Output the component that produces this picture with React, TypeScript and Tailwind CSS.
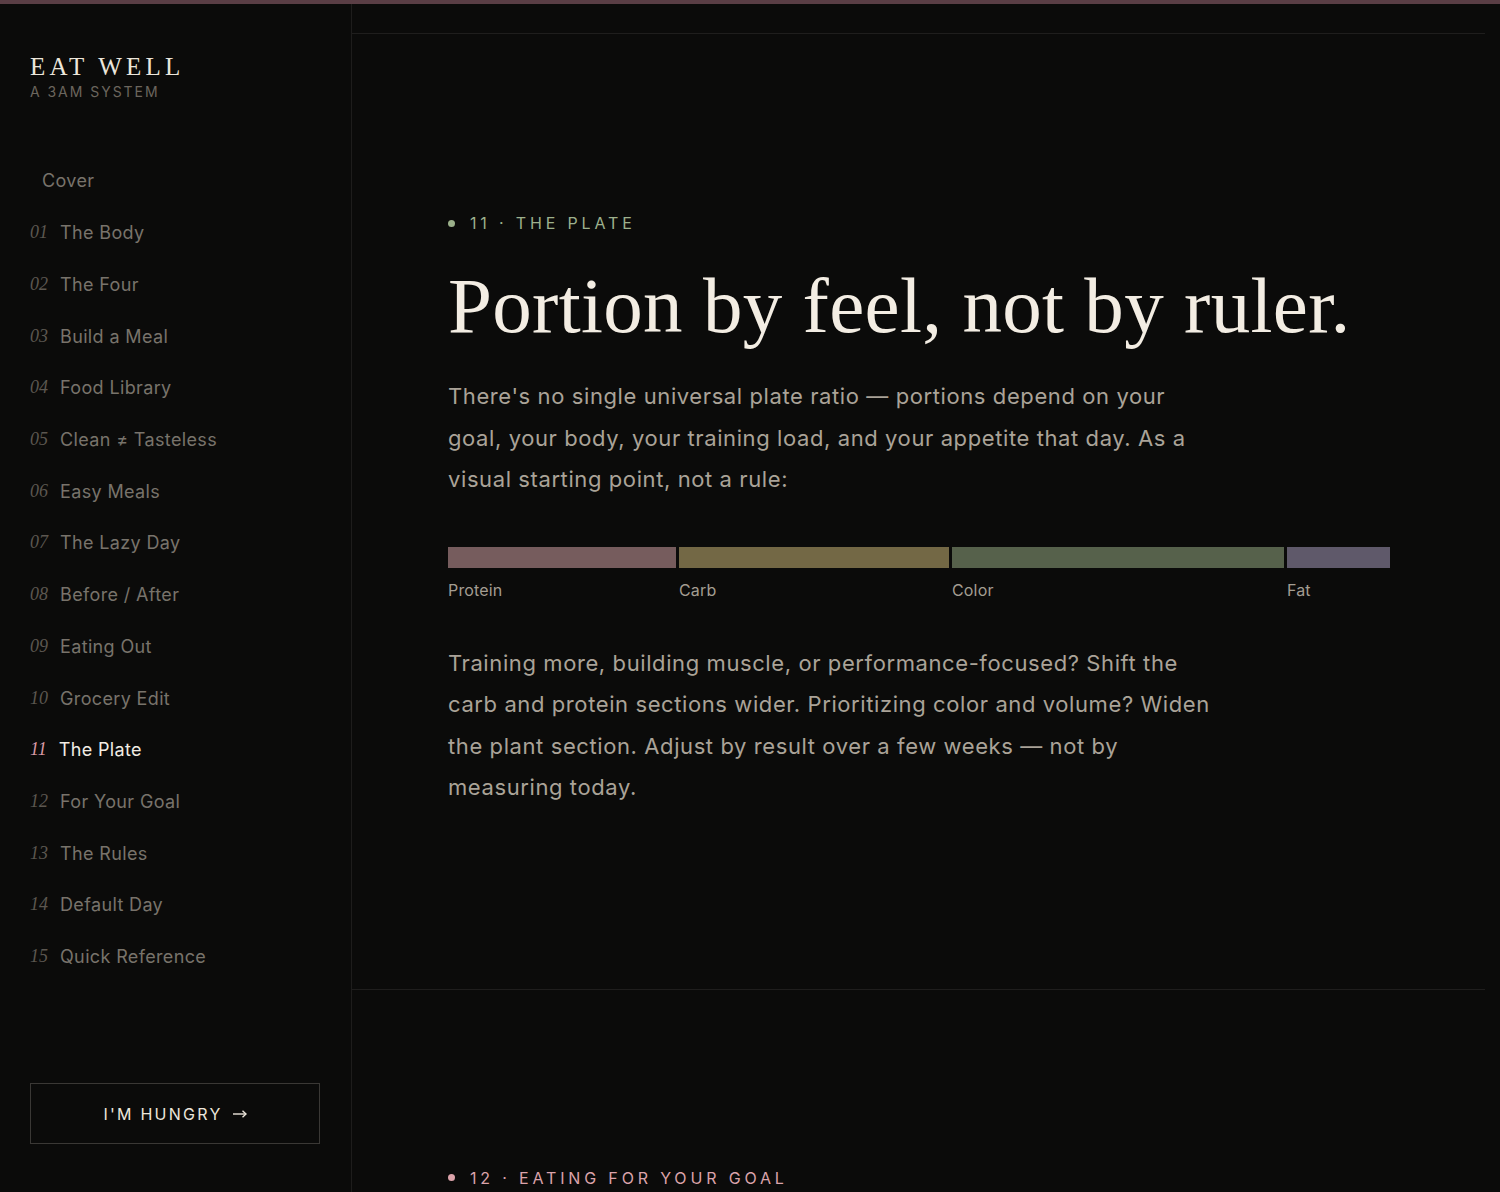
import { useState } from "react";

const chapters = [
  { n: "", title: "Cover" },
  { n: "01", title: "The Body" },
  { n: "02", title: "The Four" },
  { n: "03", title: "Build a Meal" },
  { n: "04", title: "Food Library" },
  { n: "05", title: "Clean ≠ Tasteless" },
  { n: "06", title: "Easy Meals" },
  { n: "07", title: "The Lazy Day" },
  { n: "08", title: "Before / After" },
  { n: "09", title: "Eating Out" },
  { n: "10", title: "Grocery Edit" },
  { n: "11", title: "The Plate" },
  { n: "12", title: "For Your Goal" },
  { n: "13", title: "The Rules" },
  { n: "14", title: "Default Day" },
  { n: "15", title: "Quick Reference" },
];

const plate = [
  { label: "Protein", w: "w-[228px]", color: "bg-[#765c5d]" },
  { label: "Carb", w: "w-[270px]", color: "bg-[#736845]" },
  { label: "Color", w: "w-[332px]", color: "bg-[#56614b]" },
  { label: "Fat", w: "w-[103px]", color: "bg-[#5f596a]" },
];

const sans = "font-['Inter','Liberation_Sans',sans-serif]";
const serif = "font-['Liberation_Serif','DejaVu_Serif',serif]";

function Sidebar() {
  const [active, setActive] = useState("11");
  return (
    <aside className="flex w-[352px] shrink-0 flex-col border-r border-[#1e1d1c] px-[30px] pt-[48px] pb-[48px]">
      <div>
        <div className={`${serif} text-[25px] leading-[30px] tracking-[0.17em] text-[#ece6db]`}>EAT WELL</div>
        <div className={`${sans} mt-[1px] text-[14px] leading-[18px] tracking-[0.14em] text-[#6b665e]`}>A 3AM SYSTEM</div>
      </div>

      <nav className="mt-[54px] flex flex-col">
        {chapters.map((c) => {
          const on = c.n === active;
          return (
            <button
              key={c.title}
              onClick={() => c.n && setActive(c.n)}
              className="flex h-[51.73px] items-center gap-3 text-left"
            >
              <span className={`${serif} text-[18px] italic ${on ? "text-[#d99aa6]" : "text-[#5c5750]"}`}>{c.n}</span>
              <span className={`${sans} text-[18px] tracking-[0.02em] ${on ? "text-[#f2ede4]" : "text-[#78736b]"}`}>
                {c.title}
              </span>
            </button>
          );
        })}
      </nav>

      <button
        className={`${sans} mt-auto flex h-[61px] w-[290px] items-center justify-center gap-[10px] border border-[#3a3835] text-[16px] tracking-[0.14em] text-[#ece6db]`}
      >
        <span>I'M HUNGRY</span>
        <svg width="14" height="10" viewBox="0 0 14 10" fill="none" stroke="currentColor" strokeWidth="1.4">
          <path d="M0 5h13" />
          <path d="M9.5 1.8 13 5l-3.5 3.2" />
        </svg>
      </button>
    </aside>
  );
}

function Eyebrow({ text, tone }: { text: string; tone: "green" | "pink" }) {
  const dot = tone === "green" ? "bg-[#9bb08a]" : "bg-[#dba3aa]";
  const ink = tone === "green" ? "text-[#9db18d]" : "text-[#dba3aa]";
  return (
    <div className={`${sans} flex items-center gap-[15px] text-[16px] leading-[20px] tracking-[0.24em] ${ink}`}>
      <span className={`h-[7px] w-[7px] rounded-full ${dot}`} />
      <span>{text}</span>
    </div>
  );
}

export default function App() {
  return (
    <div className="flex h-[1192px] flex-col overflow-hidden bg-[#0b0b0a]">
      <div className="h-[4px] shrink-0 bg-[#5a3e45]" />
      <div className="flex min-h-0 flex-1">
        <Sidebar />

        <main className="min-w-0 flex-1 overflow-hidden pr-[15px]">
          <section className="h-[30px] border-b border-[#1f1e1d]" />

          <section className="border-b border-[#1f1e1d] pt-[179px] pb-[180px] pl-[96px]">
            <Eyebrow text="11 · THE PLATE" tone="green" />
            <h1 className={`${serif} mt-[28px] text-[79px] leading-[90px] tracking-[0.004em] text-[#f3ede3]`}>
              Portion by feel, not by ruler.
            </h1>
            <p className={`${sans} mt-[25px] max-w-[776px] text-[22px] leading-[41.5px] tracking-[0.027em] text-[#aaa398]`}>
              There's no single universal plate ratio — portions depend on your goal, your body, your training load, and
              your appetite that day. As a visual starting point, not a rule:
            </p>

            <div className="mt-[46px] flex gap-[3px]">
              {plate.map((p) => (
                <div key={p.label} className={`${p.w} flex flex-col`}>
                  <div className={`h-[21px] ${p.color}`} />
                  <span className={`${sans} mt-[12px] text-[16px] leading-[20px] tracking-[0.01em] text-[#a39d92]`}>
                    {p.label}
                  </span>
                </div>
              ))}
            </div>

            <p className={`${sans} mt-[43px] max-w-[776px] text-[22px] leading-[41.5px] tracking-[0.027em] text-[#aaa398]`}>
              Training more, building muscle, or performance-focused? Shift the carb and protein sections wider.
              Prioritizing color and volume? Widen the plant section. Adjust by result over a few weeks — not by
              measuring today.
            </p>
          </section>

          <section className="pt-[178px] pl-[96px]">
            <Eyebrow text="12 · EATING FOR YOUR GOAL" tone="pink" />
          </section>
        </main>
      </div>
    </div>
  );
}
